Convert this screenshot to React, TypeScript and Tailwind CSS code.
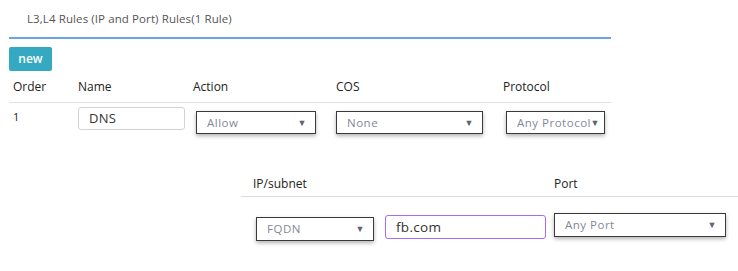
import React from "react";

const font = { fontFamily: '"Open Sans", "Liberation Sans", sans-serif' };

function Select({ label, className }: { label: string; className: string }) {
  return (
    <div
      className={`relative flex items-center border border-[#3a3a3a] bg-white shadow-[0_2px_4px_rgba(0,0,0,0.3)] pl-[10px] text-[11.5px] tracking-[0.5px] text-[#7f8899] ${className}`}
    >
      <span className="whitespace-nowrap">{label}</span>
      <span className="absolute right-[8px] top-1/2 -translate-y-1/2 text-[9px] text-[#5b6577]">▼</span>
    </div>
  );
}

export default function App() {
  return (
    <div className="relative w-[738px] h-[271px] bg-white text-[#222]" style={font}>
      <div className="pl-[9px] w-[611px]">
        <div className="h-[37px] flex items-center pl-[18px] text-[11.5px] tracking-[0.1px] text-[#555]">
          L3,L4 Rules (IP and Port) Rules(1 Rule)
        </div>
        <div className="h-[2px] bg-[#6aa3e6]" />
        <div className="pt-[6px]">
          <button className="h-[24px] w-[43px] rounded-[2px] bg-[#35a9c2] text-white text-[12px] font-semibold">
            new
          </button>
        </div>
        <div className="grid grid-cols-[65px_115px_143px_167px_112px] h-[32px] items-end pb-[6px] text-[12px] border-b border-[#e2e2e2]">
          <div className="pl-[4px]">Order</div>
          <div className="pl-[4px]">Name</div>
          <div className="pl-[4px]">Action</div>
          <div className="pl-[4px]">COS</div>
          <div className="pl-[4px]">Protocol</div>
        </div>
        <div className="grid grid-cols-[65px_115px_143px_167px_112px] items-start pt-[4px] text-[12px]">
          <div className="pl-[4px] pt-[2px] text-[11px]">1</div>
          <div className="pl-[4px]">
            <div className="h-[23px] w-[107px] rounded-[3px] border border-[#d3d3d3] flex items-center pl-[10px] text-[13px] tracking-[0.3px] text-[#333]">
              DNS
            </div>
          </div>
          <div className="pl-[7px] pt-[4px]">
            <Select label="Allow" className="h-[23px] w-[120px]" />
          </div>
          <div className="pl-[4px] pt-[4px]">
            <Select label="None" className="h-[23px] w-[147px]" />
          </div>
          <div className="pl-[7px] pt-[4px]">
            <Select label="Any Protocol" className="h-[23px] w-[99px] [&>span:last-child]:right-[4px]" />
          </div>
        </div>
      </div>
      <div className="ml-[241px] mt-[40px] w-[497px]">
        <div className="grid grid-cols-[309px_188px] h-[23px] items-start text-[12px] border-b border-[#dcdcdc]">
          <div className="pl-[12px] pt-[1px]">IP/subnet</div>
          <div className="pl-[4px] pt-[1px]">Port</div>
        </div>
        <div className="flex items-start pt-[16px]">
          <div className="pl-[15px] pt-[4px]">
            <Select label="FQDN" className="h-[24px] w-[118px]" />
          </div>
          <div className="pl-[11px] pt-[2px]">
            <div className="h-[24px] w-[161px] rounded-[3px] border border-[#a46cf2] flex items-center pl-[10px] text-[13.5px] tracking-[0.3px] text-[#333]">
              fb.com
            </div>
          </div>
          <div className="pl-[8px]">
            <Select label="Any Port" className="h-[24px] w-[172px]" />
          </div>
        </div>
      </div>
    </div>
  );
}
